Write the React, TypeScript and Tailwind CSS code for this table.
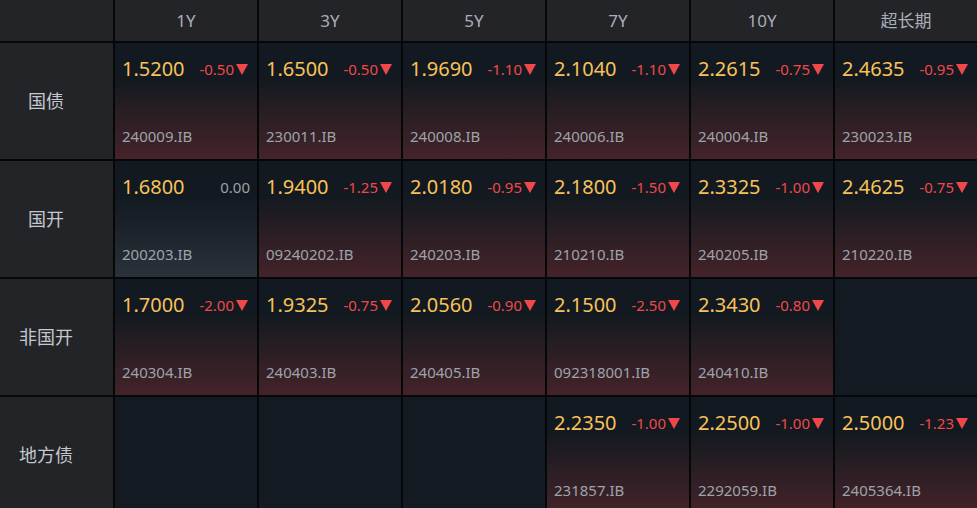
import React from "react";

type Cell = { p: string; c: string; code: string } | null;

const cols = ["1Y", "3Y", "5Y", "7Y", "10Y", "超长期"];
const rows: { label: string; cells: Cell[] }[] = [
  {
    label: "国债",
    cells: [
      { p: "1.5200", c: "-0.50", code: "240009.IB" },
      { p: "1.6500", c: "-0.50", code: "230011.IB" },
      { p: "1.9690", c: "-1.10", code: "240008.IB" },
      { p: "2.1040", c: "-1.10", code: "240006.IB" },
      { p: "2.2615", c: "-0.75", code: "240004.IB" },
      { p: "2.4635", c: "-0.95", code: "230023.IB" },
    ],
  },
  {
    label: "国开",
    cells: [
      { p: "1.6800", c: "0.00", code: "200203.IB" },
      { p: "1.9400", c: "-1.25", code: "09240202.IB" },
      { p: "2.0180", c: "-0.95", code: "240203.IB" },
      { p: "2.1800", c: "-1.50", code: "210210.IB" },
      { p: "2.3325", c: "-1.00", code: "240205.IB" },
      { p: "2.4625", c: "-0.75", code: "210220.IB" },
    ],
  },
  {
    label: "非国开",
    cells: [
      { p: "1.7000", c: "-2.00", code: "240304.IB" },
      { p: "1.9325", c: "-0.75", code: "240403.IB" },
      { p: "2.0560", c: "-0.90", code: "240405.IB" },
      { p: "2.1500", c: "-2.50", code: "092318001.IB" },
      { p: "2.3430", c: "-0.80", code: "240410.IB" },
      null,
    ],
  },
  {
    label: "地方债",
    cells: [
      null,
      null,
      null,
      { p: "2.2350", c: "-1.00", code: "231857.IB" },
      { p: "2.2500", c: "-1.00", code: "2292059.IB" },
      { p: "2.5000", c: "-1.23", code: "2405364.IB" },
    ],
  },
];

const font = {
  fontFamily: '"Noto Sans", "Noto Sans CJK SC", sans-serif',
};

function Tri() {
  return (
    <svg width="12" height="11" viewBox="0 0 12 11" className="ml-[2px] shrink-0">
      <polygon points="0,0 12,0 6,11" fill="#f0484a" />
    </svg>
  );
}

function DataCell({ cell }: { cell: Cell }) {
  if (!cell) return <div className="bg-[#141a21]" />;
  const down = cell.c.startsWith("-");
  return (
    <div
      className={
        "flex flex-col justify-between pl-[7px] pr-[9px] pt-[12px] pb-[13px] " +
        (down
          ? "bg-gradient-to-b from-[#131920] from-30% to-[#442329]"
          : "bg-gradient-to-b from-[#131920] from-30% to-[#2c323a]")
      }
    >
      <div className="flex items-center justify-between">
        <span className="text-[20px] leading-[28px] text-[#f7c25b]">{cell.p}</span>
        <span
          className={
            "flex items-center text-[15px] leading-[20px] " +
            (down ? "text-[#f0484a]" : "text-[#9aa0a8] mr-[-2px]")
          }
        >
          {cell.c}
          {down && <Tri />}
        </span>
      </div>
      <div className="text-[15px] leading-[20px] text-[#9ea3ab]">{cell.code}</div>
    </div>
  );
}

export default function App() {
  return (
    <div
      className="w-[977px] h-[508px] overflow-hidden bg-[#060708]"
      style={font}
    >
      <div className="grid grid-cols-[113px_repeat(6,142px)] grid-rows-[41px_repeat(4,116px)] gap-[2px]">
        <div className="bg-[#232428]" />
        {cols.map((c) => (
          <div
            key={c}
            className="bg-[#232428] flex items-center justify-center text-[17px] text-[#a9aeb6]"
          >
            {c}
          </div>
        ))}
        {rows.map((r) => (
          <React.Fragment key={r.label}>
            <div className="bg-[#232428] flex items-center justify-center pr-[21px] text-[18px] text-[#c3c7ce]">
              {r.label}
            </div>
            {r.cells.map((cell, i) => (
              <DataCell key={i} cell={cell} />
            ))}
          </React.Fragment>
        ))}
      </div>
    </div>
  );
}
